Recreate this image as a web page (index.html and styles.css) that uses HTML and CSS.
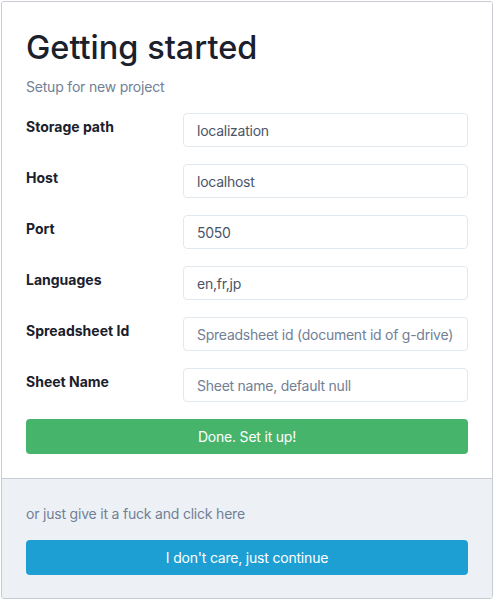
FILE: index.html
```html
<!DOCTYPE html>
<html>
<head>
<meta charset="utf-8">
<link rel="stylesheet" href="styles.css">
</head>
<body>
<div class="card">
  <div class="main">
    <h1 class="title">Getting started</h1>
    <p class="subtitle">Setup for new project</p>
    <form class="form">
      <div class="row">
        <label class="label">Storage path</label>
        <input class="input" type="text" value="localization">
      </div>
      <div class="row">
        <label class="label">Host</label>
        <input class="input" type="text" value="localhost">
      </div>
      <div class="row">
        <label class="label">Port</label>
        <input class="input" type="text" value="5050">
      </div>
      <div class="row">
        <label class="label">Languages</label>
        <input class="input" type="text" value="en,fr,jp">
      </div>
      <div class="row">
        <label class="label">Spreadsheet Id</label>
        <input class="input" type="text" placeholder="Spreadsheet id (document id of g-drive)">
      </div>
      <div class="row">
        <label class="label">Sheet Name</label>
        <input class="input" type="text" placeholder="Sheet name, default null">
      </div>
      <button type="button" class="btn btn-green">Done. Set it up!</button>
    </form>
  </div>
  <div class="footer">
    <p class="footer-text">or just give it a fuck and click here</p>
    <button type="button" class="btn btn-blue">I don't care, just continue</button>
  </div>
</div>
</body>
</html>
```
FILE: styles.css
```css
* { box-sizing: border-box; }
html, body { margin: 0; padding: 0; background: #fff; }
body {
  font-family: Inter, "Noto Sans", sans-serif;
  color: #1a202c;
  padding: 1px 3px 1px 1px;
}
.card {
  width: 492px;
  height: 598px;
  border: 1px solid #c8ccd2;
  border-radius: 3px;
  overflow: hidden;
  display: flex;
  flex-direction: column;
}
.main {
  padding: 24px 24px 24px;
  background: #fff;
}
.title {
  margin: 0;
  font-size: 32.5px;
  font-weight: 500;
  line-height: 44px;
  color: #1a202c;
}
.subtitle {
  margin: 7px 0 16px;
  font-size: 14px;
  line-height: 20px;
  letter-spacing: -0.2px;
  color: #718096;
}
.form { display: flex; flex-direction: column; gap: 17px; }
.row {
  display: grid;
  grid-template-columns: 157px 1fr;
  align-items: start;
}
.label {
  font-size: 14px;
  font-weight: 700;
  line-height: 20px;
  padding-top: 4px;
  color: #1a202c;
}
.input {
  height: 34px;
  border: 1px solid #e2e8f0;
  border-radius: 4px;
  padding: 0 8px 0 13px;
  font-family: inherit;
  font-size: 14px;
  letter-spacing: -0.25px;
  color: #4a5568;
  background: #fff;
  outline: none;
  width: 100%;
}
.input::placeholder { color: #718096; opacity: 1; }
.btn {
  display: block;
  width: 100%;
  height: 35px;
  border: none;
  border-radius: 4px;
  font-family: inherit;
  font-size: 14px;
  letter-spacing: -0.2px;
  color: #fff;
  cursor: pointer;
}
.btn-green { background: #47b46b; }
.btn-blue { background: #1e9fd3; }
.footer {
  flex: 1;
  background: #edf1f5;
  border-top: 1px solid #c8ccd2;
  padding: 24px;
}
.footer-text {
  margin: 0 0 16px;
  font-size: 14px;
  line-height: 21px;
  letter-spacing: -0.2px;
  color: #718096;
}
```
